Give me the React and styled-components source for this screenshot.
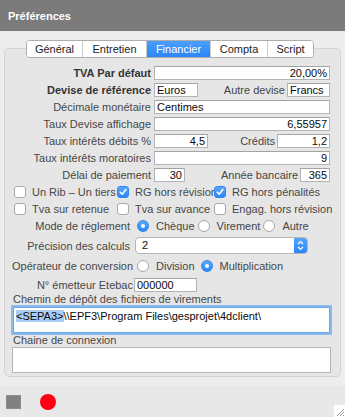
import React from 'react'
import styled, { createGlobalStyle } from 'styled-components'

const GlobalStyle = createGlobalStyle`
  html, body {
    margin: 0;
    padding: 0;
  }
  body {
    font-family: "Liberation Sans", Arial, sans-serif;
    font-size: 11px;
  }
`

const Window = styled.div`
  width: 345px;
  height: 417px;
  display: flex;
  flex-direction: column;
  background: #ededed;
  overflow: hidden;
`

const TitleBar = styled.div`
  height: 31px;
  flex-shrink: 0;
  display: flex;
  align-items: center;
  padding-left: 8px;
  background: #7b7b7b;
  color: #fff;
  font-weight: bold;
  font-size: 11px;
`

const Body = styled.div`
  padding: 9px 4px 8px;
`

const Tabs = styled.div`
  position: relative;
  z-index: 1;
  display: flex;
  width: fit-content;
  height: 18px;
  box-sizing: border-box;
  margin: 0 0 -10px 22px;
  border: 1px solid #adadad;
  border-radius: 4px;
  background: #fff;
  overflow: hidden;
`

const Tab = styled.div`
  width: ${p => p.$w}px;
  box-sizing: border-box;
  text-align: center;
  line-height: 16px;
  font-size: 11px;
  color: ${p => (p.$active ? '#fff' : '#1c1c1c')};
  background: ${p => (p.$active ? 'linear-gradient(#4b9ffa, #2b87f6)' : '#fff')};
  border-left: ${p => (p.$first ? 'none' : '1px solid #c9c9c9')};
`

const Panel = styled.div`
  border: 1px solid #d3d3d3;
  border-radius: 5px;
  background: #e6e6e6;
  padding: 17px 9px 3px 7px;
`

const Row = styled.div`
  display: flex;
  align-items: center;
  height: ${p => p.$h || 14}px;
  margin-bottom: ${p => (p.$mb === undefined ? 3 : p.$mb)}px;
  padding-right: 1px;
`

const Label = styled.div`
  width: ${p => p.$w}px;
  flex-shrink: 0;
  margin-right: ${p => p.$mr || 3}px;
  text-align: right;
  white-space: nowrap;
  font-weight: ${p => (p.$bold ? 'bold' : 'normal')};
  color: ${p => (p.$bold ? '#343434' : '#474747')};
`

const SubLabel = styled.div`
  flex: 1;
  text-align: right;
  margin-right: 2px;
  white-space: nowrap;
  color: #474747;
`

const Field = styled.div`
  box-sizing: border-box;
  height: 14px;
  ${p => (p.$w ? `width: ${p.$w}px; flex-shrink: 0;` : 'flex: 1;')}
  padding: 0 2px;
  border: 1px solid #b4b4b4;
  border-top-color: #a3a3a3;
  background: #fff;
  color: #0a0a0a;
  line-height: 12px;
  text-align: ${p => (p.$num ? 'right' : 'left')};
  white-space: nowrap;
  overflow: hidden;
`

const CheckGrid = styled.div`
  display: grid;
  grid-template-columns: 103px 97px 1fr;
  padding-left: 2px;
  margin-bottom: 3px;
  row-gap: 3px;
`

const CheckItem = styled.div`
  display: flex;
  align-items: center;
  height: 14px;
  white-space: nowrap;
  color: #474747;
`

const Box = styled.span`
  display: inline-flex;
  align-items: center;
  justify-content: center;
  width: 12px;
  height: 12px;
  box-sizing: border-box;
  margin-right: 6px;
  border-radius: 3px;
  border: 1px solid ${p => (p.$on ? '#2f86f2' : '#a8a8a8')};
  background: ${p => (p.$on ? 'linear-gradient(#5aa8fb, #2b86f5)' : '#fff')};
  flex-shrink: 0;
`

const Radio = styled.span`
  display: inline-flex;
  align-items: center;
  justify-content: center;
  width: 12px;
  height: 12px;
  box-sizing: border-box;
  margin-left: ${p => p.$ml || 0}px;
  margin-right: 7px;
  border-radius: 50%;
  border: 1px solid ${p => (p.$on ? '#2f86f2' : '#a8a8a8')};
  background: ${p => (p.$on ? 'linear-gradient(#5aa8fb, #2b86f5)' : '#fff')};
  flex-shrink: 0;
  &::after {
    content: '';
    display: ${p => (p.$on ? 'block' : 'none')};
    width: 4px;
    height: 4px;
    border-radius: 50%;
    background: #fff;
  }
`

const OptText = styled.span`
  color: #474747;
  white-space: nowrap;
`

const Select = styled.div`
  display: flex;
  width: 173px;
  height: 17px;
  box-sizing: border-box;
  border: 1px solid #b6b6b6;
  border-radius: 4px;
  background: #fff;
  overflow: hidden;
`

const SelectValue = styled.div`
  flex: 1;
  padding-left: 6px;
  line-height: 15px;
  color: #111;
`

const Stepper = styled.div`
  width: 13px;
  display: flex;
  align-items: center;
  justify-content: center;
  background: linear-gradient(#55a5fb, #2a86f5);
`

const Caption = styled.div`
  height: ${p => p.$h}px;
  line-height: ${p => p.$h}px;
  padding-left: 1px;
  color: #474747;
  white-space: nowrap;
`

const TextArea = styled.div`
  box-sizing: border-box;
  height: 26px;
  padding: 2px 2px 0;
  background: #fff;
  border: 1px solid ${p => (p.$focus ? '#6aa5e6' : '#b4b4b4')};
  box-shadow: ${p => (p.$focus ? '0 0 0 2px #8bbcf0' : 'none')};
  color: #0a0a0a;
  line-height: 13px;
  white-space: nowrap;
  overflow: hidden;
  ${p => (p.$focus ? 'margin: 0 1px 0 1px;' : '')}
`

const Selected = styled.span`
  background: #a9cdf6;
`

const BottomBar = styled.div`
  flex: 1;
  display: flex;
  align-items: flex-start;
  background: #e8e8e8;
`

const StopSquare = styled.div`
  width: 15px;
  height: 14px;
  margin: 10px 0 0 6px;
  background: #808080;
  border: 1px solid #8c8c8c;
  box-sizing: border-box;
`

const RecordDot = styled.div`
  width: 16px;
  height: 16px;
  margin: 9px 0 0 19px;
  border-radius: 50%;
  background: #ff0012;
`

const Grip = styled.div`
  margin-left: auto;
  align-self: flex-end;
  width: 11px;
  height: 12px;
  background: #fff;
  display: flex;
`

const Check = () => (
  <svg width="8" height="8" viewBox="0 0 8 8">
    <path d="M1.2 4.2 L3.2 6.2 L6.8 1.5" fill="none" stroke="#fff" strokeWidth="1.6" strokeLinecap="round" strokeLinejoin="round" />
  </svg>
)

const Chevrons = () => (
  <svg width="7" height="11" viewBox="0 0 7 11">
    <path d="M1 4 L3.5 1.5 L6 4 M1 7 L3.5 9.5 L6 7" fill="none" stroke="#fff" strokeWidth="1.2" />
  </svg>
)

const CheckBox = ({ on, children }) => (
  <CheckItem>
    <Box $on={on}>{on && <Check />}</Box>
    {children}
  </CheckItem>
)

const tabs = [
  ['Général', 55],
  ['Entretien', 64],
  ['Financier', 64],
  ['Compta', 57],
  ['Script', 46],
]

export default function App() {
  return (
    <>
      <GlobalStyle />
      <Window>
        <TitleBar>Préférences</TitleBar>
        <Body>
          <Tabs>
            {tabs.map(([name, w], i) => (
              <Tab key={name} $w={w} $first={i === 0} $active={name === 'Financier'}>
                {name}
              </Tab>
            ))}
          </Tabs>
          <Panel>
            <Row>
              <Label $w={139} $bold>TVA Par défaut</Label>
              <Field $num>20,00%</Field>
            </Row>
            <Row>
              <Label $w={139} $bold>Devise de référence</Label>
              <Field $w={44}>Euros</Field>
              <SubLabel>Autre devise</SubLabel>
              <Field $w={43}>Francs</Field>
            </Row>
            <Row>
              <Label $w={139}>Décimale monétaire</Label>
              <Field>Centimes</Field>
            </Row>
            <Row>
              <Label $w={139}>Taux Devise affichage</Label>
              <Field $num>6,55957</Field>
            </Row>
            <Row>
              <Label $w={139}>Taux intérêts débits %</Label>
              <Field $w={54} $num>4,5</Field>
              <SubLabel>Crédits</SubLabel>
              <Field $w={53} $num>1,2</Field>
            </Row>
            <Row>
              <Label $w={139}>Taux intérêts moratoires</Label>
              <Field $num>9</Field>
            </Row>
            <Row>
              <Label $w={139}>Délai de paiement</Label>
              <Field $w={31} $num>30</Field>
              <SubLabel>Année bancaire</SubLabel>
              <Field $w={30} $num>365</Field>
            </Row>
            <CheckGrid>
              <CheckBox>Un Rib – Un tiers</CheckBox>
              <CheckBox on>RG hors révision</CheckBox>
              <CheckBox on>RG hors pénalités</CheckBox>
              <CheckBox>Tva sur retenue</CheckBox>
              <CheckBox>Tva sur avance</CheckBox>
              <CheckBox>Engag. hors révision</CheckBox>
            </CheckGrid>
            <Row $mb={4}>
              <Label $w={118} $mr={7}>Mode de réglement</Label>
              <Radio $on />
              <OptText>Chèque</OptText>
              <Radio $ml={3} />
              <OptText>Virement</OptText>
              <Radio $ml={3} />
              <OptText>Autre</OptText>
            </Row>
            <Row $h={17} $mb={5}>
              <Label $w={118} $mr={5}>Précision des calculs</Label>
              <Select>
                <SelectValue>2</SelectValue>
                <Stepper>
                  <Chevrons />
                </Stepper>
              </Select>
            </Row>
            <Row $mb={5}>
              <Label $w={118} $mr={7}>Opérateur de conversion</Label>
              <Radio />
              <OptText>Division</OptText>
              <Radio $ml={6} $on />
              <OptText>Multiplication</OptText>
            </Row>
            <Row $mb={0}>
              <Label $w={121} $mr={1}>N° émetteur Etebac</Label>
              <Field $w={63}>000000</Field>
            </Row>
            <Caption $h={15}>Chemin de dépôt des fichiers de virements</Caption>
            <TextArea $focus>
              <Selected>&lt;SEPA3&gt;</Selected>
              {'\\\\EPF3\\Program Files\\gesprojet\\4dclient\\'}
            </TextArea>
            <Caption $h={14}>Chaine de connexion</Caption>
            <TextArea />
          </Panel>
        </Body>
        <BottomBar>
          <StopSquare />
          <RecordDot />
          <Grip>
            <svg width="11" height="12" viewBox="0 0 11 12">
              <path d="M3 11 L10 4 M6 11 L10 7 M9 11 L10 10" stroke="#9a9a9a" strokeWidth="1" />
            </svg>
          </Grip>
        </BottomBar>
      </Window>
    </>
  )
}
